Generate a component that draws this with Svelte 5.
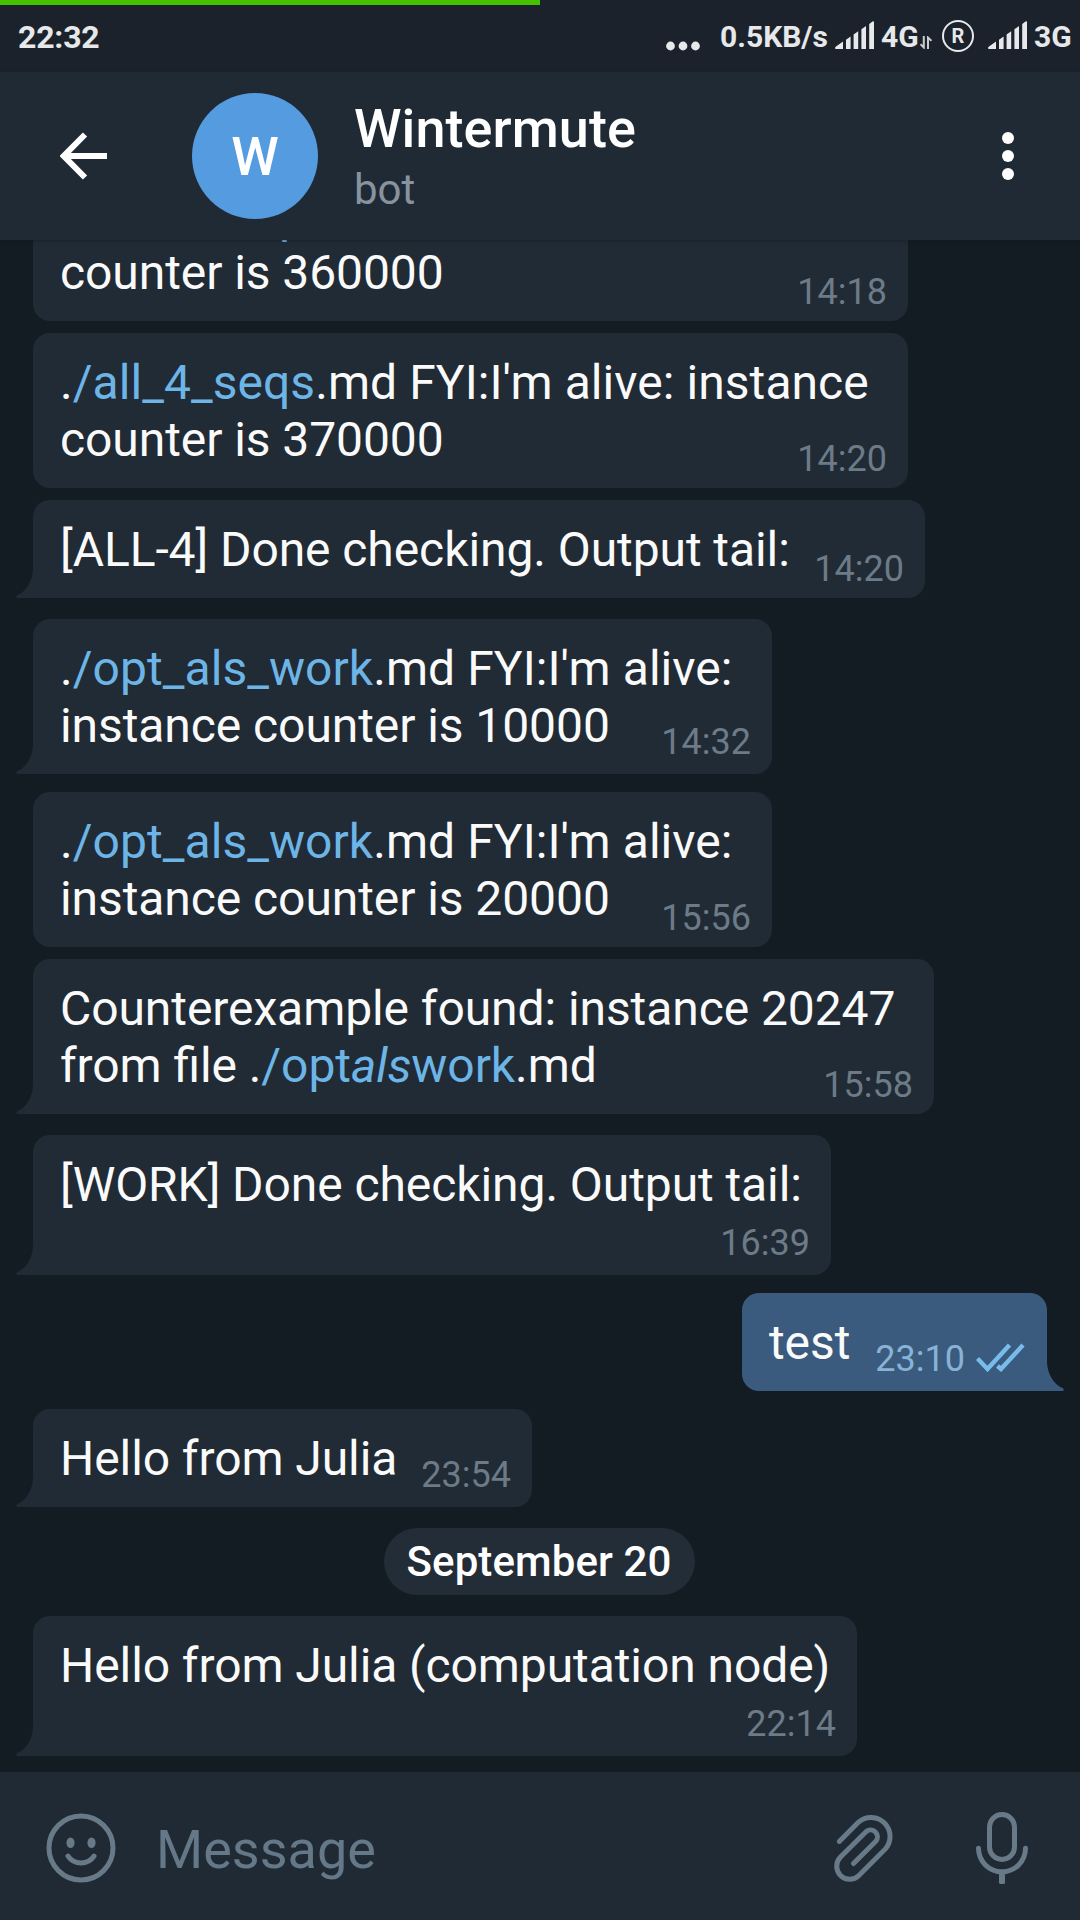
<script lang="ts">
  type Part = { text: string; kind?: 'link' | 'em' };
  type Item = {
    lines?: Part[][];
    time?: string;
    date?: string;
    width?: number;
    height?: number;
    gap: number;
    tail?: boolean;
    solo?: boolean;
    out?: boolean;
  };

  const items: Item[] = [
    { lines: [[{ text: '.' }, { text: '/all_4_seqs', kind: 'link' }, { text: ".md FYI:I'm alive: instance" }], [{ text: 'counter is 360000' }]], time: '14:18', width: 875, height: 155, gap: 12 },
    { lines: [[{ text: '.' }, { text: '/all_4_seqs', kind: 'link' }, { text: ".md FYI:I'm alive: instance" }], [{ text: 'counter is 370000' }]], time: '14:20', width: 875, height: 155, gap: 12 },
    { lines: [[{ text: '[ALL-4] Done checking. Output tail:' }]], time: '14:20', width: 892, height: 98, gap: 21, tail: true },
    { lines: [[{ text: '.' }, { text: '/opt_als_work', kind: 'link' }, { text: ".md FYI:I'm alive:" }], [{ text: 'instance counter is 10000' }]], time: '14:32', width: 739, height: 155, gap: 18, tail: true, solo: true },
    { lines: [[{ text: '.' }, { text: '/opt_als_work', kind: 'link' }, { text: ".md FYI:I'm alive:" }], [{ text: 'instance counter is 20000' }]], time: '15:56', width: 739, height: 155, gap: 12 },
    { lines: [[{ text: 'Counterexample found: instance 20247' }], [{ text: 'from file .' }, { text: '/opt', kind: 'link' }, { text: 'als', kind: 'em' }, { text: 'work', kind: 'link' }, { text: '.md' }]], time: '15:58', width: 901, height: 155, gap: 21, tail: true },
    { lines: [[{ text: '[WORK] Done checking. Output tail:' }]], time: '16:39', width: 798, height: 140, gap: 18, tail: true, solo: true },
    { lines: [[{ text: 'test' }]], time: '23:10', width: 305, height: 98, gap: 18, tail: true, solo: true, out: true },
    { lines: [[{ text: 'Hello from Julia' }]], time: '23:54', width: 499, height: 98, gap: 21, tail: true, solo: true },
    { date: 'September 20', gap: 21 },
    { lines: [[{ text: 'Hello from Julia (computation node)' }]], time: '22:14', width: 824, height: 140, gap: 16, tail: true, solo: true }
  ];
</script>

{#snippet signal()}
  <svg class="signal" width="39" height="28" viewBox="0 0 39 28">
    <path d="M0 27Q0 26 1 25.5L8 20.5V28H1Q0 28 0 27ZM11 18.8L15.6 15.5V28H11ZM18.6 13.6L23.2 10.3V28H18.6ZM26.4 8.3L31 5V28H26.4ZM34.2 3L37.5 .5Q39 0 39 1V28H34.2Z" />
  </svg>
{/snippet}

<div class="screen">
  <div class="progress"></div>
  <div class="status">
    <span class="clock">22:32</span>
    <svg class="more" width="34" height="10" viewBox="0 0 34 10"><circle cx="4.5" cy="5" r="4.4" /><circle cx="17" cy="5" r="4.4" /><circle cx="29.5" cy="5" r="4.4" /></svg>
    <span class="net speed">0.5KB/s</span>
    {@render signal()}
    <span class="net gen">4G</span>
    <svg class="arrows" width="12" height="13" viewBox="0 0 12 13"><path d="M3.8 0V11.5L.5 8.2M8 13V1.5L11.5 4.8" /></svg>
    <span class="roaming">R</span>
    {@render signal()}
    <span class="net gen">3G</span>
  </div>

  <header>
    <svg class="back" width="48" height="48" viewBox="0 0 48 48"><path d="M47 24H5M25 2.5L3.8 24L25 45.5" /></svg>
    <div class="avatar">W</div>
    <div class="who">
      <div class="name">Wintermute</div>
      <div class="kind">bot</div>
    </div>
    <svg class="menu" width="12" height="48" viewBox="0 0 12 48"><circle cx="6" cy="6" r="6" /><circle cx="6" cy="24" r="6" /><circle cx="6" cy="42" r="6" /></svg>
  </header>

  <main>
    {#each items as item}
      {#if item.date}
        <div class="date" style="margin-bottom: {item.gap}px">{item.date}</div>
      {:else}
        <div class="bubble" class:tail={item.tail} class:solo={item.solo} class:out={item.out} style="width: {item.width}px; height: {item.height}px; margin-bottom: {item.gap}px">
          <div class="text">
            {#each item.lines ?? [] as line}
              <div class:path={line[0].text === '.'}>{#each line as part}<span class={part.kind}>{part.text}</span>{/each}</div>
            {/each}
          </div>
          <div class="time">
            {item.time}
            {#if item.out}
              <svg class="checks" width="49" height="29" viewBox="0 0 49 29"><path d="M1.5 15.5L11.5 26L33.5 2M21.5 23L25 26L47 2" /></svg>
            {/if}
          </div>
          {#if item.tail}
            <svg class="nub" width="18" height="30" viewBox="0 0 18 30"><path d="M17 0C17 12 11 23 1 27.3Q-.6 29.2 1 30H18V0Z" /></svg>
          {/if}
        </div>
      {/if}
    {/each}
  </main>

  <footer>
    <svg width="70" height="70" viewBox="0 0 70 70">
      <circle class="line" cx="35" cy="35" r="32" />
      <ellipse cx="24.5" cy="29.7" rx="4.1" ry="5.2" /><ellipse cx="45.5" cy="29.7" rx="4.1" ry="5.2" />
      <path class="line" d="M22 43.2C28 52.3 42 52.3 48 43.2" />
    </svg>
    <div class="placeholder">Message</div>
    <svg class="clip" width="62" height="70" viewBox="53 53 62 70">
      <path class="line" d="M59.3 81.4L78.6 62.1A19 19 0 0 1 105.4 88.9L78.9 115.4A13 13 0 0 1 60.5 97L86.2 71.5A6.9 6.9 0 0 1 95.9 81.2L73.5 103.6" />
    </svg>
    <svg width="54" height="74" viewBox="195 51 54 74">
      <rect class="line" x="209.5" y="54.5" width="25" height="45" rx="12.5" />
      <path class="line" d="M198.5 88.3A23.5 23.5 0 0 0 245.5 88.3" />
      <rect x="219" y="112" width="6" height="12" rx="1.5" />
    </svg>
  </footer>
</div>

<style>
  :global(body) {
    margin: 0;
    background: #141c23;
  }
  .screen {
    width: 1080px;
    height: 1920px;
    display: flex;
    flex-direction: column;
    overflow: hidden;
    background: #141c23;
    font-family: Roboto, sans-serif;
    color: #fafafa;
    white-space: nowrap;
  }
  .progress {
    position: relative;
    z-index: 1;
    width: 540px;
    height: 5px;
    flex: none;
    background: #46c200;
  }
  .status {
    height: 67px;
    flex: none;
    box-sizing: border-box;
    padding: 0 7px 0 18px;
    display: flex;
    align-items: flex-start;
    background: #1b222b;
    color: #e6e8ea;
    fill: #e6e8ea;
    box-shadow: 0 -5px 0 #1b222b;
  }
  .clock {
    flex: 1;
    margin-top: 13px;
    font-size: 32px;
    line-height: 38px;
    font-weight: 700;
    letter-spacing: -0.2px;
  }
  .more {
    margin: 36px 20px 0 0;
  }
  .net {
    margin-top: 14px;
    font-size: 30px;
    line-height: 35px;
    font-weight: 700;
  }
  .speed {
    width: 115px;
  }
  .gen {
    width: 39px;
    margin-left: 7px;
  }
  .signal {
    margin-top: 16px;
  }
  .arrows {
    margin: 31px 10px 0 0;
    fill: none;
    stroke: #c9ccd0;
    stroke-width: 2;
  }
  .roaming {
    width: 28px;
    height: 28px;
    margin: 15px 14px 0 0;
    border: 2px solid #e6e8ea;
    border-radius: 50%;
    text-align: center;
    font-size: 20px;
    line-height: 29px;
    font-weight: 700;
  }
  header {
    height: 168px;
    flex: none;
    box-sizing: border-box;
    padding: 0 66px 0 60px;
    display: flex;
    align-items: center;
    background: #202a35;
    color: #fff;
    box-shadow: 0 1px 4px #10161c66;
    z-index: 1;
  }
  .back {
    fill: none;
    stroke: #fff;
    stroke-width: 6;
  }
  .avatar {
    width: 126px;
    height: 126px;
    margin-left: 84px;
    border-radius: 50%;
    background: #559bdf;
    text-align: center;
    font-size: 54px;
    line-height: 128px;
    font-weight: 500;
  }
  .who {
    flex: 1;
    margin: 0 0 0 36px;
  }
  .name {
    font-size: 54px;
    line-height: 62px;
    font-weight: 500;
    letter-spacing: 0.06px;
  }
  .kind {
    margin-top: 5px;
    font-size: 42px;
    line-height: 50px;
    color: #87939f;
  }
  .menu {
    fill: #fff;
  }
  main {
    flex: 1;
    min-height: 0;
    display: flex;
    flex-direction: column;
    justify-content: flex-end;
    align-items: flex-start;
    padding: 0 33px;
    overflow: hidden;
  }
  .bubble {
    position: relative;
    flex: none;
    box-sizing: border-box;
    display: grid;
    padding: 21px 21px 8px 27px;
    border-radius: 17px;
    background: #212b35;
  }
  .tail {
    border-bottom-left-radius: 0;
  }
  .out {
    align-self: flex-end;
    border-bottom-left-radius: 17px;
    border-bottom-right-radius: 0;
    background: #3b5b7e;
  }
  .solo {
    padding-bottom: 11px;
  }
  .text,
  .time {
    grid-area: 1 / 1;
  }
  .text {
    font-size: 48px;
    line-height: 57px;
    letter-spacing: -0.08px;
    font-feature-settings: 'liga' 1;
  }
  .path {
    letter-spacing: 0.06px;
  }
  .link,
  .em {
    color: #6db5e6;
  }
  .em {
    font-style: italic;
  }
  .time {
    place-self: end;
    display: flex;
    align-items: flex-end;
    font-size: 36px;
    line-height: 42px;
    color: #6c7b87;
  }
  .out .time {
    color: #88b3d6;
  }
  .checks {
    margin: 0 1px 8px 11px;
    fill: none;
    stroke: #78bcec;
    stroke-width: 4.4;
  }
  .nub {
    position: absolute;
    left: -17px;
    bottom: 0;
    fill: #212b35;
  }
  .out .nub {
    left: auto;
    right: -17px;
    fill: #3b5b7e;
    transform: scaleX(-1);
  }
  .date {
    flex: none;
    align-self: center;
    width: 311px;
    height: 67px;
    margin-right: 2px;
    border-radius: 34px;
    background: #232d37;
    color: #fff;
    text-align: center;
    font-size: 42px;
    line-height: 67px;
    font-weight: 500;
    letter-spacing: 0.1px;
  }
  footer {
    height: 148px;
    flex: none;
    box-sizing: border-box;
    padding: 3px 51px 0 46px;
    display: flex;
    align-items: center;
    background: #202a35;
    fill: #687988;
  }
  .line {
    fill: none;
    stroke: #687988;
    stroke-width: 5;
    stroke-linecap: round;
  }
  .placeholder {
    flex: 1;
    margin: 4px 0 0 40px;
    font-size: 54px;
    line-height: 64px;
    color: #647887;
  }
  .clip {
    margin-right: 80px;
  }
</style>
